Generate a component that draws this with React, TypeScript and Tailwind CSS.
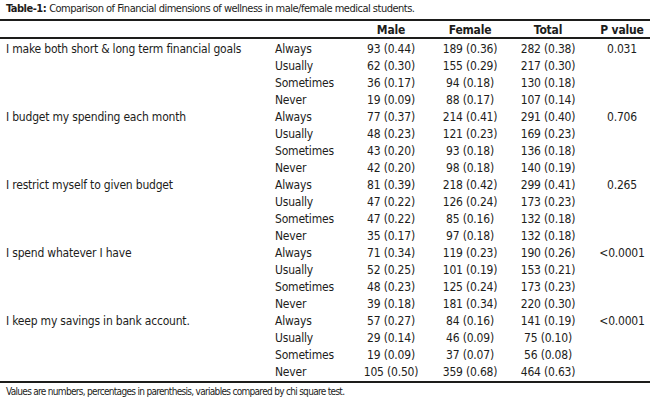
import React from "react";

type Row = { r: string; m: string; f: string; t: string };
type Group = { label: string; p: string; rows: Row[] };

const groups: Group[] = [
  {
    label: "I make both short & long term financial goals",
    p: "0.031",
    rows: [
      { r: "Always", m: "93 (0.44)", f: "189 (0.36)", t: "282 (0.38)" },
      { r: "Usually", m: "62 (0.30)", f: "155 (0.29)", t: "217 (0.30)" },
      { r: "Sometimes", m: "36 (0.17)", f: "94 (0.18)", t: "130 (0.18)" },
      { r: "Never", m: "19 (0.09)", f: "88 (0.17)", t: "107 (0.14)" },
    ],
  },
  {
    label: "I budget my spending each month",
    p: "0.706",
    rows: [
      { r: "Always", m: "77 (0.37)", f: "214 (0.41)", t: "291 (0.40)" },
      { r: "Usually", m: "48 (0.23)", f: "121 (0.23)", t: "169 (0.23)" },
      { r: "Sometimes", m: "43 (0.20)", f: "93 (0.18)", t: "136 (0.18)" },
      { r: "Never", m: "42 (0.20)", f: "98 (0.18)", t: "140 (0.19)" },
    ],
  },
  {
    label: "I restrict myself to given budget",
    p: "0.265",
    rows: [
      { r: "Always", m: "81 (0.39)", f: "218 (0.42)", t: "299 (0.41)" },
      { r: "Usually", m: "47 (0.22)", f: "126 (0.24)", t: "173 (0.23)" },
      { r: "Sometimes", m: "47 (0.22)", f: "85 (0.16)", t: "132 (0.18)" },
      { r: "Never", m: "35 (0.17)", f: "97 (0.18)", t: "132 (0.18)" },
    ],
  },
  {
    label: "I spend whatever I have",
    p: "<0.0001",
    rows: [
      { r: "Always", m: "71 (0.34)", f: "119 (0.23)", t: "190 (0.26)" },
      { r: "Usually", m: "52 (0.25)", f: "101 (0.19)", t: "153 (0.21)" },
      { r: "Sometimes", m: "48 (0.23)", f: "125 (0.24)", t: "173 (0.23)" },
      { r: "Never", m: "39 (0.18)", f: "181 (0.34)", t: "220 (0.30)" },
    ],
  },
  {
    label: "I keep my savings in bank account.",
    p: "<0.0001",
    rows: [
      { r: "Always", m: "57 (0.27)", f: "84 (0.16)", t: "141 (0.19)" },
      { r: "Usually", m: "29 (0.14)", f: "46 (0.09)", t: "75 (0.10)" },
      { r: "Sometimes", m: "19 (0.09)", f: "37 (0.07)", t: "56 (0.08)" },
      { r: "Never", m: "105 (0.50)", f: "359 (0.68)", t: "464 (0.63)" },
    ],
  },
];

const font = {
  fontFamily:
    "'Liberation Sans Narrow', 'Arial Narrow', 'DejaVu Sans Condensed', 'Liberation Sans', sans-serif",
  fontStretch: "condensed" as const,
};

const gridCols = "grid grid-cols-[275px_75px_82px_76px_80px_62px]";

export default function App() {
  return (
    <div
      className="w-[650px] h-[403px] bg-white text-[#1d1d1b] text-[12px] tracking-[-0.2px] overflow-hidden"
      style={font}
    >
      <div className="h-[19px] pl-[6px] flex items-center text-[11px] tracking-[-0.5px]">
        <span className="font-bold">Table-1:</span>
        <span className="ml-[3px]">
          Comparison of Financial dimensions of wellness in male/female medical students.
        </span>
      </div>
      <div className="h-[2px] bg-[#1d1d1b]" />
      <div className={`${gridCols} h-[16px] items-center font-bold`}>
        <div />
        <div />
        <div className="text-center">Male</div>
        <div className="text-center">Female</div>
        <div className="text-center">Total</div>
        <div className="text-center pl-[6px]">P value</div>
      </div>
      <div className="h-[1.5px] bg-[#1d1d1b]" />
      <div className="pt-[1px]">
        {groups.map((g, gi) =>
          g.rows.map((row, ri) => (
            <div key={`${gi}-${ri}`} className={`${gridCols} h-[17px] items-center`}>
              <div className="pl-[6px] whitespace-nowrap">{ri === 0 ? g.label : ""}</div>
              <div>{row.r}</div>
              <div className="text-center">{row.m}</div>
              <div className="text-center">{row.f}</div>
              <div className="text-center">{row.t}</div>
              <div className="text-center pl-[6px]">{ri === 0 ? g.p : ""}</div>
            </div>
          ))
        )}
      </div>
      <div className="h-[2px] bg-[#1d1d1b] mt-[1px]" />
      <div className="pl-[6px] h-[18px] flex items-center text-[10px] tracking-[-0.7px]">
        Values are numbers, percentages in parenthesis, variables compared by chi square test.
      </div>
    </div>
  );
}
